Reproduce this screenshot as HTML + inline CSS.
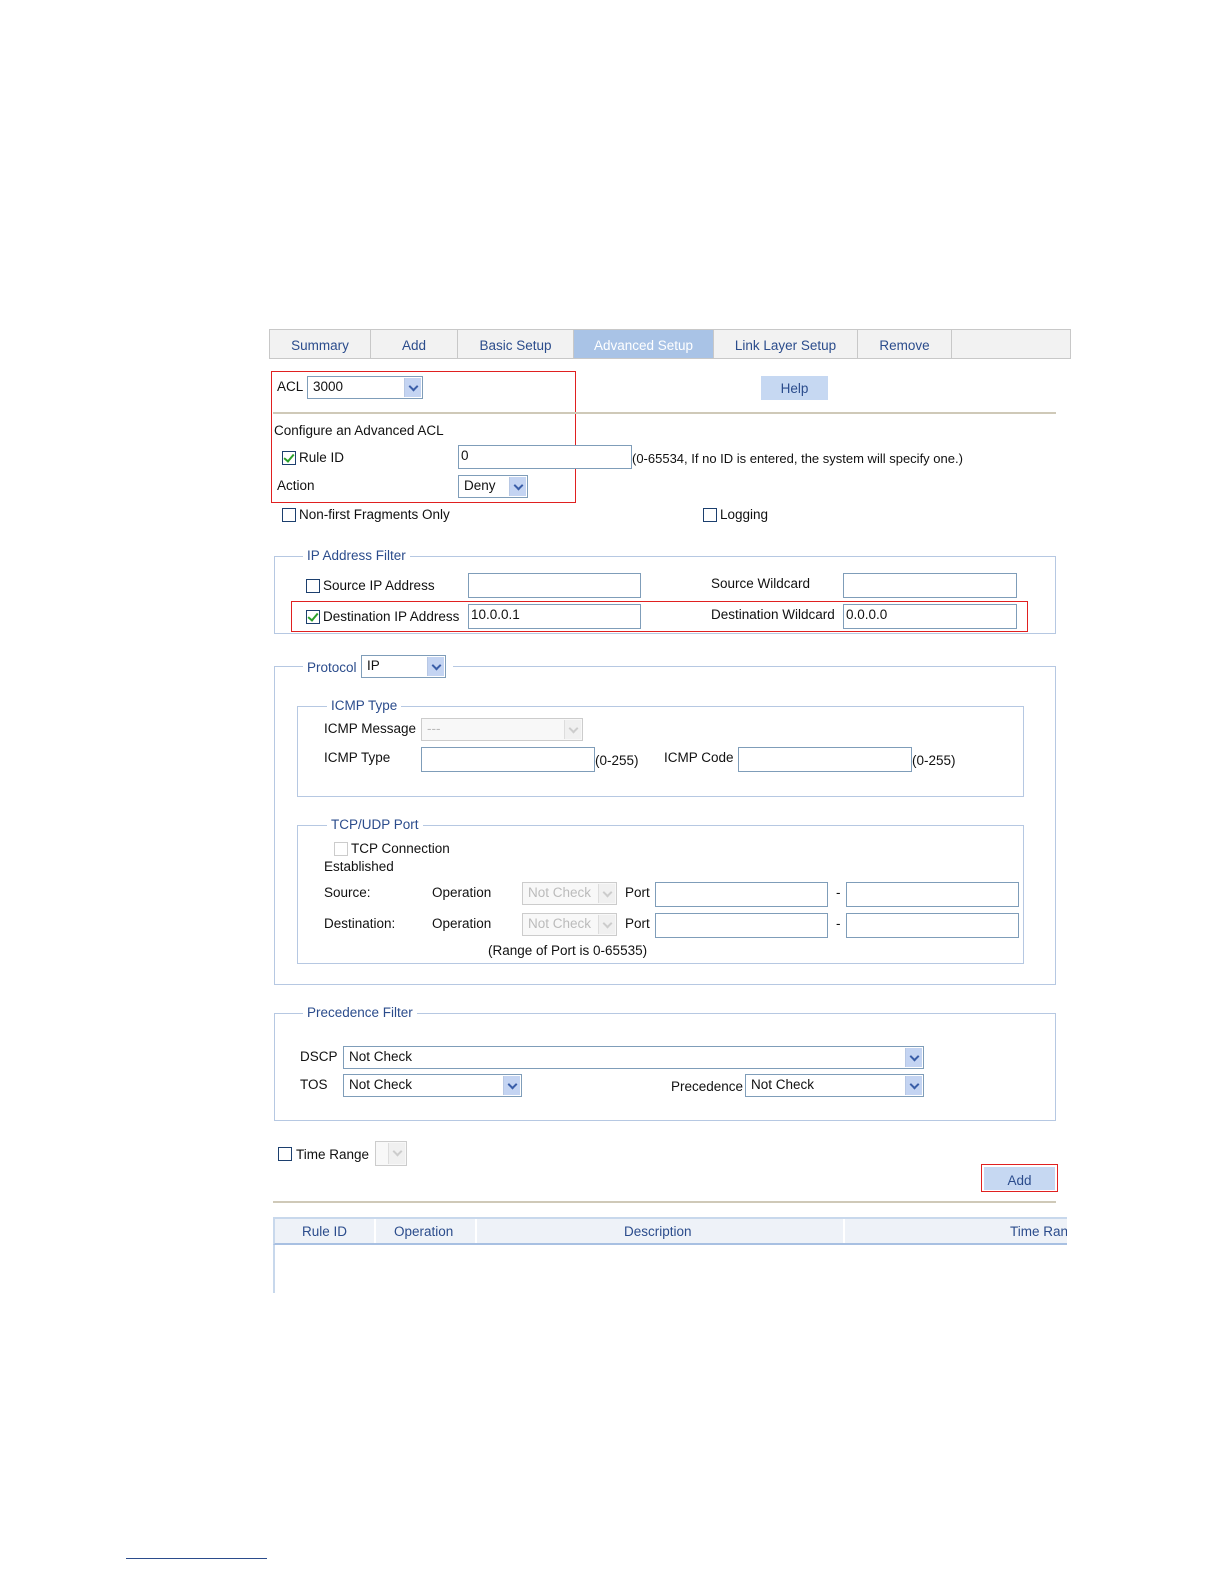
<!DOCTYPE html>
<html><head><meta charset="utf-8"><style>
body{margin:0;width:1224px;height:1584px;background:#fff;position:relative;font-family:"Liberation Sans",sans-serif;font-size:13.5px;color:#111;overflow:hidden}
div{position:absolute;box-sizing:border-box}
.t{white-space:nowrap;line-height:16px}
.b{color:#2b4c8c}
.in{background:#fff;border:1px solid #7f9db9;padding:1px 2px;line-height:18px}
.sel{background:#fff;border:1px solid #7f9db9;padding:1px 5px;line-height:18px}
.sel .ar{position:absolute;right:1px;top:1px;bottom:1px;width:17px;background:#c4d4f2;border-left:1px solid #b8c8e4}
.sel .ar:after{content:"";position:absolute;left:5px;top:5px;width:5px;height:5px;border-right:2px solid #3a5ea8;border-bottom:2px solid #3a5ea8;transform:rotate(45deg)}
.dis{border-color:#ccc;color:#bbb;background:#f8f8f8}
.dis .ar{background:#f0f0f0;border-left:1px solid #ddd}
.dis .ar:after{border-color:#ccc}
.cb{width:14px;height:14px;border:1px solid #1c3f6e;background:#fff}
.ck:after{content:"";position:absolute;left:3px;top:0px;width:4px;height:8px;border-right:2px solid #2aa02a;border-bottom:2px solid #2aa02a;transform:rotate(40deg)}
.fs{border:1px solid #b6c8e2}
.lg{background:#fff;padding:0 4px}
.red{border:1.5px solid #e02020}
.tab{top:330px;height:28px;border-right:1px solid #c8c8c8;text-align:center;line-height:31px;color:#2b4c8c}
</style></head><body>
<!-- tab bar -->
<div style="left:269px;top:329px;width:802px;height:30px;background:#f2f2f2;border:1px solid #c8c8c8"></div>
<div class="tab" style="left:270px;width:101px">Summary</div>
<div class="tab" style="left:371px;width:87px">Add</div>
<div class="tab" style="left:458px;width:116px">Basic Setup</div>
<div class="tab" style="left:574px;width:140px;background:#a9c3e6;color:#fff">Advanced Setup</div>
<div class="tab" style="left:714px;width:144px">Link Layer Setup</div>
<div class="tab" style="left:858px;width:94px">Remove</div>

<div class="red" style="left:271px;top:371px;width:305px;height:132px"></div>
<div class="t" style="left:277px;top:379px">ACL</div>
<div class="sel" style="left:307px;top:376px;width:116px;height:23px">3000<div class="ar"></div></div>
<div class="b" style="left:761px;top:376px;width:67px;height:24px;background:#c6d8f2;text-align:center;line-height:26px">Help</div>
<div style="left:273px;top:412px;width:783px;height:2px;background:#cfc9b8"></div>
<div class="t" style="left:274px;top:423px">Configure an Advanced ACL</div>
<div class="cb ck" style="left:282px;top:451px"></div>
<div class="t" style="left:299px;top:450px">Rule ID</div>
<div class="in" style="left:458px;top:445px;width:174px;height:24px">0</div>
<div class="t" style="left:632px;top:451px;font-size:13px">(0-65534, If no ID is entered, the system will specify one.)</div>
<div class="t" style="left:277px;top:478px">Action</div>
<div class="sel" style="left:458px;top:475px;width:70px;height:23px">Deny<div class="ar"></div></div>
<div class="cb" style="left:282px;top:508px"></div>
<div class="t" style="left:299px;top:507px">Non-first Fragments Only</div>
<div class="cb" style="left:703px;top:508px"></div>
<div class="t" style="left:720px;top:507px">Logging</div>

<!-- IP filter -->
<div class="fs" style="left:274px;top:556px;width:782px;height:78px"></div>
<div class="t b lg" style="left:303px;top:548px">IP Address Filter</div>
<div class="cb" style="left:306px;top:579px"></div>
<div class="t" style="left:323px;top:578px">Source IP Address</div>
<div class="in" style="left:468px;top:573px;width:173px;height:25px"></div>
<div class="t" style="left:711px;top:576px">Source Wildcard</div>
<div class="in" style="left:843px;top:573px;width:174px;height:25px"></div>
<div class="red" style="left:291px;top:601px;width:737px;height:31px"></div>
<div class="cb ck" style="left:306px;top:610px"></div>
<div class="t" style="left:323px;top:609px">Destination IP Address</div>
<div class="in" style="left:468px;top:604px;width:173px;height:25px">10.0.0.1</div>
<div class="t" style="left:711px;top:607px">Destination Wildcard</div>
<div class="in" style="left:843px;top:604px;width:174px;height:25px">0.0.0.0</div>

<!-- Protocol -->
<div class="fs" style="left:274px;top:666px;width:782px;height:319px"></div>
<div class="lg" style="left:303px;top:654px;width:150px;height:24px"></div>
<div class="t b" style="left:307px;top:660px">Protocol</div>
<div class="sel" style="left:361px;top:655px;width:85px;height:23px">IP<div class="ar"></div></div>

<div class="fs" style="left:297px;top:706px;width:727px;height:91px"></div>
<div class="t b lg" style="left:327px;top:698px">ICMP Type</div>
<div class="t" style="left:324px;top:721px">ICMP Message</div>
<div class="sel dis" style="left:421px;top:718px;width:162px;height:23px">---<div class="ar"></div></div>
<div class="t" style="left:324px;top:750px">ICMP Type</div>
<div class="in" style="left:421px;top:747px;width:174px;height:25px"></div>
<div class="t" style="left:595px;top:753px">(0-255)</div>
<div class="t" style="left:664px;top:750px">ICMP Code</div>
<div class="in" style="left:738px;top:747px;width:174px;height:25px"></div>
<div class="t" style="left:912px;top:753px">(0-255)</div>

<div class="fs" style="left:297px;top:825px;width:727px;height:139px"></div>
<div class="t b lg" style="left:327px;top:817px">TCP/UDP Port</div>
<div class="cb" style="left:334px;top:842px;border-color:#ccc"></div>
<div class="t" style="left:351px;top:841px">TCP Connection</div>
<div class="t" style="left:324px;top:859px">Established</div>
<div class="t" style="left:324px;top:885px">Source:</div>
<div class="t" style="left:432px;top:885px">Operation</div>
<div class="sel dis" style="left:522px;top:882px;width:95px;height:23px">Not Check<div class="ar"></div></div>
<div class="t" style="left:625px;top:885px">Port</div>
<div class="in" style="left:655px;top:882px;width:173px;height:25px"></div>
<div class="t" style="left:836px;top:885px">-</div>
<div class="in" style="left:846px;top:882px;width:173px;height:25px"></div>
<div class="t" style="left:324px;top:916px">Destination:</div>
<div class="t" style="left:432px;top:916px">Operation</div>
<div class="sel dis" style="left:522px;top:913px;width:95px;height:23px">Not Check<div class="ar"></div></div>
<div class="t" style="left:625px;top:916px">Port</div>
<div class="in" style="left:655px;top:913px;width:173px;height:25px"></div>
<div class="t" style="left:836px;top:916px">-</div>
<div class="in" style="left:846px;top:913px;width:173px;height:25px"></div>
<div class="t" style="left:488px;top:943px">(Range of Port is 0-65535)</div>

<!-- Precedence -->
<div class="fs" style="left:274px;top:1013px;width:782px;height:108px"></div>
<div class="t b lg" style="left:303px;top:1005px">Precedence Filter</div>
<div class="t" style="left:300px;top:1049px">DSCP</div>
<div class="sel" style="left:343px;top:1046px;width:581px;height:23px">Not Check<div class="ar"></div></div>
<div class="t" style="left:300px;top:1077px">TOS</div>
<div class="sel" style="left:343px;top:1074px;width:179px;height:23px">Not Check<div class="ar"></div></div>
<div class="t" style="left:671px;top:1079px">Precedence</div>
<div class="sel" style="left:745px;top:1074px;width:179px;height:23px">Not Check<div class="ar"></div></div>

<div class="cb" style="left:278px;top:1147px"></div>
<div class="t" style="left:296px;top:1147px">Time Range</div>
<div class="sel dis" style="left:375px;top:1141px;width:32px;height:25px"><div class="ar"></div></div>
<div class="red" style="left:981px;top:1164px;width:77px;height:28px"></div>
<div class="b" style="left:984px;top:1167px;width:71px;height:23px;background:#c6d8f2;text-align:center;line-height:28px">Add</div>
<div style="left:273px;top:1201px;width:783px;height:2px;background:#cfc9b8"></div>

<!-- table -->
<div style="left:273px;top:1217px;width:794px;height:28px;background:#eef2f8;border-top:2px solid #c8d8ec;border-left:2px solid #c8d8ec;border-bottom:2px solid #a8c0e2"></div>
<div style="left:374px;top:1219px;width:2px;height:24px;background:#fff"></div>
<div style="left:475px;top:1219px;width:2px;height:24px;background:#fff"></div>
<div style="left:843px;top:1219px;width:2px;height:24px;background:#fff"></div>
<div class="t b" style="left:302px;top:1224px">Rule ID</div>
<div class="t b" style="left:394px;top:1224px">Operation</div>
<div class="t b" style="left:624px;top:1224px">Description</div>
<div style="left:1010px;top:1224px;width:57px;height:18px;overflow:hidden"><span class="t b" style="position:absolute;left:0;top:0">Time Range</span></div>
<div style="left:273px;top:1245px;width:2px;height:48px;background:#c8d8ec"></div>

<div style="left:126px;top:1558px;width:141px;height:1px;background:#2b4c8c"></div>
</body></html>
